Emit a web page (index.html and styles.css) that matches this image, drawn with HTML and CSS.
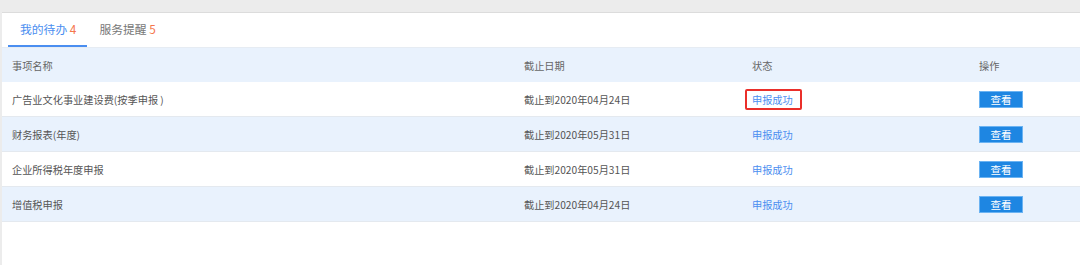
FILE: index.html
```html
<!DOCTYPE html>
<html lang="zh-CN">
<head>
<meta charset="utf-8">
<link rel="stylesheet" href="styles.css">
</head>
<body>
<div class="panel">
  <div class="tabs">
    <div class="tab active">我的待办 <span class="count">4</span></div>
    <div class="tab">服务提醒 <span class="count">5</span></div>
  </div>
  <div class="table">
    <div class="row head">
      <div>事项名称</div><div>截止日期</div><div>状态</div><div>操作</div>
    </div>
    <div class="row">
      <div>广告业文化事业建设费(按季申报 )</div>
      <div>截止到2020年04月24日</div>
      <div><span class="status marked">申报成功</span></div>
      <div><span class="btn">查看</span></div>
    </div>
    <div class="row alt">
      <div>财务报表(年度)</div>
      <div>截止到2020年05月31日</div>
      <div><span class="status">申报成功</span></div>
      <div><span class="btn">查看</span></div>
    </div>
    <div class="row">
      <div>企业所得税年度申报</div>
      <div>截止到2020年05月31日</div>
      <div><span class="status">申报成功</span></div>
      <div><span class="btn">查看</span></div>
    </div>
    <div class="row alt">
      <div>增值税申报</div>
      <div>截止到2020年04月24日</div>
      <div><span class="status">申报成功</span></div>
      <div><span class="btn">查看</span></div>
    </div>
  </div>
</div>
</body>
</html>
```

FILE: styles.css
```css
html, body {
  margin: 0;
  padding: 0;
  height: 100%;
  background: #ececec;
  overflow: hidden;
}
body {
  font-family: "Noto Sans CJK SC", "Noto Sans", sans-serif;
  color: #555;
}
.panel {
  margin: 12px 0 0 2px;
  border-top: 1px solid #dcdcdc;
  background: #fff;
  height: 260px;
}
.tabs {
  display: flex;
  padding-left: 6px;
  height: 34px;
  border-bottom: 1px solid #e6ecf3;
}
.tab {
  font-size: 11.8px;
  line-height: 32px;
  padding: 0 11px 0 12px;
  color: #777;
  border-bottom: 2px solid transparent;
}
.tab.active {
  color: #4a8ef0;
  border-bottom-color: #4a8ef0;
}
.count {
  color: #f5764c;
}
.row {
  display: grid;
  grid-template-columns: 512px 228px 227px 1fr;
  align-items: center;
  padding-left: 10px;
  height: 34px;
  border-bottom: 1px solid #e4e9ef;
  font-size: 10.2px;
  line-height: 13px;
  color: #555;
}
.row.head {
  background: #e9f2fd;
  color: #666;
  border-bottom: none;
}
.row.alt {
  background: #e9f2fd;
}
.status {
  color: #4a8ef0;
}
.marked {
  position: relative;
}
.marked::after {
  content: "";
  position: absolute;
  top: -3px;
  bottom: -3px;
  left: -7px;
  right: -9px;
  border: 2px solid #ea2f2a;
  border-radius: 2px;
}
.btn {
  display: inline-flex;
  align-items: center;
  justify-content: center;
  width: 42px;
  height: 15px;
  background: #1e86e2;
  border: 1px solid #6bb3f2;
  color: #fff;
  font-size: 10.5px;
}
```
